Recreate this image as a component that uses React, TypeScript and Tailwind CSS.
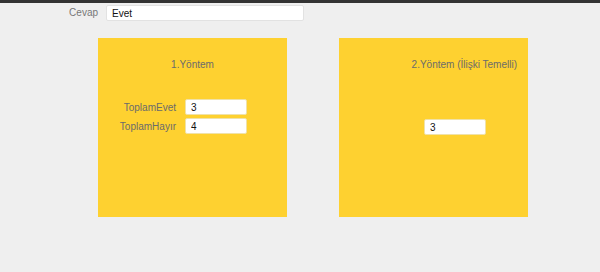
export default function App() {
  return (
    <div className="w-[600px] h-[272px] bg-[#efefef] font-['Liberation_Sans',Arial,sans-serif] overflow-hidden">
      <div className="h-[3px] bg-[#333333]" />

      {/* Cevap row */}
      <div className="flex items-center mt-[2px]">
        <div className="w-[98px] text-right text-[10px] leading-[16px] text-[#777]">Cevap</div>
        <input
          readOnly
          value="Evet"
          className="ml-[8px] w-[198px] h-[16px] bg-white border border-[#e2e2e2] rounded-[2px] px-[5px] text-[10px] text-[#111] outline-none"
        />
      </div>

      {/* Method panels */}
      <div className="flex gap-[52px] pl-[98px] mt-[17px]">
        <div className="w-[189px] h-[179px] bg-[#fed130] flex flex-col">
          <div className="pt-[20px] text-center text-[10px] leading-[14px] text-[#6b6b6b]">1.Yöntem</div>
          <div className="mt-[27px] flex flex-col gap-[3px]">
            <div className="flex items-center">
              <div className="w-[78px] text-right text-[10px] text-[#6b6b6b]">ToplamEvet</div>
              <input
                readOnly
                value="3"
                className="ml-[9px] w-[62px] h-[16px] bg-white border border-[#f0e2a8] rounded-[2px] px-[5px] text-[10px] text-[#111] outline-none"
              />
            </div>
            <div className="flex items-center">
              <div className="w-[78px] text-right text-[10px] text-[#6b6b6b]">ToplamHayır</div>
              <input
                readOnly
                value="4"
                className="ml-[9px] w-[62px] h-[16px] bg-white border border-[#f0e2a8] rounded-[2px] px-[5px] text-[10px] text-[#111] outline-none"
              />
            </div>
          </div>
        </div>

        <div className="w-[189px] h-[179px] bg-[#fed130] flex flex-col">
          <div className="pt-[20px] pr-[11px] text-right text-[10px] leading-[14px] text-[#6b6b6b]">2.Yöntem (İlişki Temelli)</div>
          <div className="mt-[47px] pl-[85px]">
            <input
              readOnly
              value="3"
              className="block w-[62px] h-[16px] bg-white border border-[#f0e2a8] rounded-[2px] px-[5px] text-[10px] text-[#111] outline-none"
            />
          </div>
        </div>
      </div>
    </div>
  );
}
